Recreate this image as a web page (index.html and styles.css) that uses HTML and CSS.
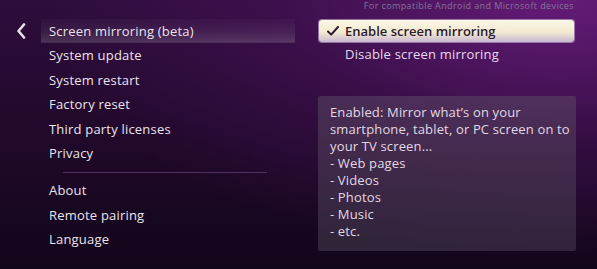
FILE: index.html
```html
<!DOCTYPE html>
<html>
<head>
<meta charset="utf-8">
<link rel="stylesheet" href="styles.css">
</head>
<body>
<div class="screen">
  <div class="left">
    <div class="back">
      <svg width="10" height="16" viewBox="0 0 10 16"><polyline points="8,1.5 2.5,8 8,14.5" fill="none" stroke="#e6dfe9" stroke-width="2.6" stroke-linecap="round" stroke-linejoin="round"/></svg>
    </div>
    <ul class="menu">
      <li class="item active">Screen mirroring (beta)</li>
      <li class="item">System update</li>
      <li class="item">System restart</li>
      <li class="item">Factory reset</li>
      <li class="item">Third party licenses</li>
      <li class="item">Privacy</li>
      <li class="sep"></li>
      <li class="item">About</li>
      <li class="item">Remote pairing</li>
      <li class="item">Language</li>
    </ul>
  </div>
  <div class="right">
    <div class="note">For compatible Android and Microsoft devices</div>
    <div class="option selected"><svg class="check" width="12" height="10" viewBox="0 0 12 10"><path d="M1 5.5 L4.2 8.6 L11 1" fill="none" stroke="#2a1b30" stroke-width="2" stroke-linecap="round" stroke-linejoin="round"/></svg>Enable screen mirroring</div>
    <div class="option">Disable screen mirroring</div>
    <div class="info">
      <p>Enabled: Mirror what’s on your smartphone, tablet, or PC screen on to your TV screen...</p>
      <p>- Web pages</p>
      <p>- Videos</p>
      <p>- Photos</p>
      <p>- Music</p>
      <p>- etc.</p>
    </div>
  </div>
</div>
</body>
</html>
```
FILE: styles.css
```css
html, body {
  margin: 0;
  padding: 0;
}
body {
  width: 597px;
  height: 269px;
  overflow: hidden;
  font-family: "Open Sans", "DejaVu Sans", sans-serif;
  background: #120716;
}
.screen {
  width: 597px;
  height: 269px;
  display: flex;
  background:
    radial-gradient(ellipse 520px 260px at 560px 0px, rgba(110, 30, 130, 0.85), rgba(80, 20, 100, 0.4) 55%, rgba(40, 10, 50, 0) 100%),
    linear-gradient(180deg, #2e0d3c 0%, #22092c 45%, #12061a 100%);
}
.left {
  width: 297px;
  display: flex;
}
.back {
  width: 41px;
  padding-top: 23px;
  padding-left: 16px;
  box-sizing: border-box;
}
.back svg { display: block; }
.menu {
  list-style: none;
  margin: 0;
  padding: 19px 0 0 0;
  width: 254px;
}
.item {
  height: 24.4px;
  line-height: 24.4px;
  padding-left: 8px;
  font-size: 13px;
  color: #e9e4ec;
  letter-spacing: 0.2px;
}
.item.active {
  background: linear-gradient(180deg, rgba(255,255,255,0.02) 0%, rgba(255,255,255,0.08) 60%, rgba(255,255,255,0.16) 100%);
  border-bottom: 1px solid rgba(255,255,255,0.1);
  height: 23.4px;
}
.sep {
  height: 1px;
  margin: 7px 28px 5px 22px;
  background: rgba(140, 100, 160, 0.45);
}
.right {
  flex: 1;
  padding-left: 21px;
  padding-right: 21px;
}
.note {
  font-size: 9px;
  color: #85739a;
  text-align: right;
  height: 20px;
  line-height: 11px;
  padding-right: 2px;
  letter-spacing: 0.4px;
}
.option {
  height: 22px;
  line-height: 22px;
  padding-left: 26px;
  margin-left: 1px;
  margin-right: 2px;
  font-size: 13px;
  color: #e5d9ee;
  letter-spacing: 0.2px;
  margin-top: 1px;
}
.option.selected {
  margin-top: 0;
  display: flex;
  align-items: center;
  padding-left: 8px;
  color: #2a1b30;
  font-weight: 600;
  letter-spacing: 0;
  border-radius: 3px;
  background: linear-gradient(180deg, #fbf6e6 0%, #f3ead0 55%, #c9b8d4 100%);
  box-shadow: 0 0 0 1px rgba(230, 215, 235, 0.5);
}
.check {
  display: block;
  margin-right: 6px;
}
.info {
  margin-top: 31px;
  height: 155px;
  box-sizing: border-box;
  padding: 8px 4px 0 12px;
  background: linear-gradient(180deg, rgba(90, 70, 100, 0.55), rgba(70, 60, 80, 0.55));
  border-radius: 2px;
  font-size: 13px;
  line-height: 17px;
  color: #e0d9e3;
  letter-spacing: 0.15px;
}
.info p {
  margin: 0;
}
```
